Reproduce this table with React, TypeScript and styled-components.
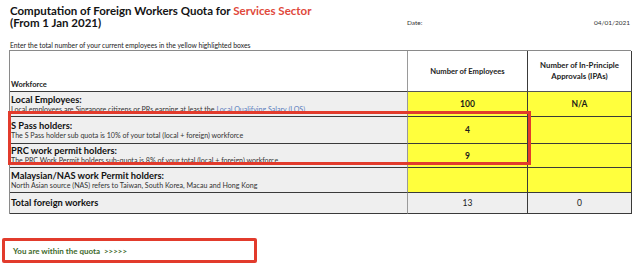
import styled, { createGlobalStyle } from "styled-components";

const GlobalStyle = createGlobalStyle`
  html, body {
    margin: 0;
    padding: 0;
    background: #ffffff;
  }
  body {
    font-family: Lato, "Open Sans", "Liberation Sans", sans-serif;
    color: #1a1a1a;
  }
`;

const Page = styled.div`
  width: 640px;
  height: 273px;
  overflow: hidden;
  position: relative;
  background: #fff;
`;

const Head = styled.div`
  display: flex;
  align-items: flex-end;
  padding: 5px 10px 0 10px;
`;

const Title = styled.h1`
  margin: 0;
  width: 397px;
  font-size: 11.5px;
  line-height: 12px;
  font-weight: 700;
  color: #141414;
`;

const Accent = styled.span`
  color: #e0483b;
`;

const DateLabel = styled.div`
  flex: 1;
  display: flex;
  justify-content: space-between;
  font-size: 6.5px;
  color: #333;
  padding-bottom: 3px;
`;

const Instruction = styled.div`
  margin: 12px 0 0 10px;
  font-size: 6.8px;
  line-height: 8px;
  color: #222;
`;

const TableWrap = styled.div`
  position: relative;
  margin: 1px 0 0 9px;
  width: 622px;
`;

const Grid = styled.div`
  display: grid;
  grid-template-columns: 398px 120px 104px;
  grid-template-rows: 41px 25px 27px 24px 25px 21px;
  border-left: 1px solid #8a8a8a;
  border-top: 1px solid #8a8a8a;
`;

const Cell = styled.div<{ $bg?: string; $head?: boolean }>`
  background: ${(p) => p.$bg ?? "#ffffff"};
  border-right: 1px solid #3a3a3a;
  border-bottom: 1px solid ${(p) => (p.$head ? "#555" : "#3a3a3a")};
  box-sizing: border-box;
  display: flex;
  flex-direction: column;
  justify-content: center;
  align-items: center;
  text-align: center;
`;

const LabelCell = styled.div<{ $bg?: string; $bottom?: boolean }>`
  background: ${(p) => p.$bg ?? "#efefef"};
  border-right: 1px solid #9a9a9a;
  border-bottom: 1px solid #3a3a3a;
  box-sizing: border-box;
  display: flex;
  flex-direction: column;
  justify-content: ${(p) => (p.$bottom ? "flex-end" : "center")};
  padding: 0 0 1px 1px;
`;

const ColHead = styled.div<{ $size?: number }>`
  font-size: ${(p) => p.$size ?? 7.6}px;
  line-height: 11px;
  font-weight: 700;
  color: #222;
`;

const RowTitle = styled.div`
  font-size: 9.3px;
  line-height: 12px;
  font-weight: 700;
  color: #111;
`;

const RowNote = styled.div`
  font-size: 7.1px;
  line-height: 8px;
  color: #333;
  white-space: nowrap;
`;

const Link = styled.span`
  color: #5b7dbd;
`;

const Value = styled.div<{ $bold?: boolean }>`
  font-size: 8.5px;
  font-weight: ${(p) => (p.$bold ? 700 : 400)};
  color: #1a1a1a;
`;

const Highlight = styled.div`
  position: absolute;
  left: -1px;
  top: 61px;
  width: 523px;
  height: 54px;
  border: 3px solid #e23b2c;
  box-sizing: border-box;
  pointer-events: none;
`;

const Verdict = styled.div`
  margin: 24px 0 0 2px;
  width: 255px;
  height: 25px;
  box-sizing: border-box;
  border: 3px solid #e23b2c;
  border-radius: 2px;
  display: flex;
  align-items: center;
  padding-left: 8px;
  font-size: 8px;
  font-weight: 700;
  color: #3d6a2b;
  white-space: pre;
`;

const YELLOW = "#ffff3d";
const GREY = "#efefef";

const rows = [
  {
    title: "Local Employees:",
    note: (
      <>
        Local employees are Singapore citizens or PRs earning at least the{" "}
        <Link>Local Qualifying Salary (LQS)</Link>
      </>
    ),
    count: "100",
    ipa: "N/A",
  },
  {
    title: "S Pass holders:",
    note: "The S Pass holder sub quota is 10% of your total (local + foreign) workforce",
    count: "4",
    ipa: "",
  },
  {
    title: "PRC work permit holders:",
    note: "The PRC Work Permit holders sub-quota is 8% of your total (local + foreign) workforce",
    count: "9",
    ipa: "",
  },
  {
    title: "Malaysian/NAS work Permit holders:",
    note: "North Asian source (NAS) refers to Taiwan, South Korea, Macau and Hong Kong",
    count: "",
    ipa: "",
  },
];

export default function App() {
  return (
    <Page>
      <GlobalStyle />
      <Head>
        <Title>
          Computation of Foreign Workers Quota for <Accent>Services Sector</Accent>
          <br />
          (From 1 Jan 2021)
        </Title>
        <DateLabel>
          <span>Date:</span>
          <span>04/01/2021</span>
        </DateLabel>
      </Head>
      <Instruction>
        Enter the total number of your current employees in the yellow highlighted boxes
      </Instruction>
      <TableWrap>
        <Grid>
          <LabelCell $bg="#ffffff" $bottom>
            <ColHead $size={7.5}>Workforce</ColHead>
          </LabelCell>
          <Cell $head>
            <ColHead>Number of Employees</ColHead>
          </Cell>
          <Cell $head>
            <ColHead $size={7.8}>
              Number of In-Principle
              <br />
              Approvals (IPAs)
            </ColHead>
          </Cell>
          {rows.map((r) => (
            <>
              <LabelCell key={r.title}>
                <RowTitle>{r.title}</RowTitle>
                <RowNote>{r.note}</RowNote>
              </LabelCell>
              <Cell $bg={YELLOW}>
                <Value $bold>{r.count}</Value>
              </Cell>
              <Cell $bg={YELLOW}>
                <Value $bold>{r.ipa}</Value>
              </Cell>
            </>
          ))}
          <LabelCell>
            <RowTitle>Total foreign workers</RowTitle>
          </LabelCell>
          <Cell $bg={GREY}>
            <Value>13</Value>
          </Cell>
          <Cell $bg={GREY}>
            <Value>0</Value>
          </Cell>
        </Grid>
        <Highlight />
      </TableWrap>
      <Verdict>You are within the quota  &gt;&gt;&gt;&gt;&gt;</Verdict>
    </Page>
  );
}
